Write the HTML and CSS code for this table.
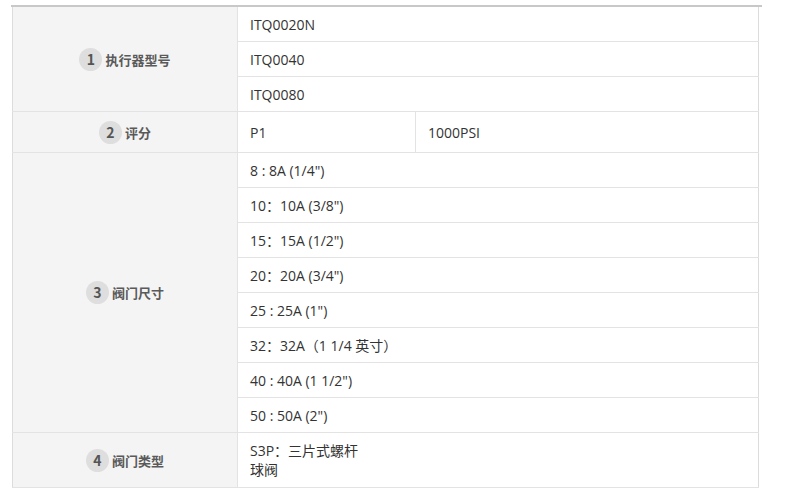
FILE: index.html
```html
<!DOCTYPE html>
<html lang="zh">
<head>
<meta charset="utf-8">
<link rel="stylesheet" href="styles.css">
</head>
<body>
<div class="wrap">
  <table class="spec">
    <colgroup>
      <col class="c1">
      <col class="c2">
      <col class="c3">
    </colgroup>
    <tr class="r">
      <th rowspan="3"><span class="lbl"><span class="num">1</span>执行器型号</span></th>
      <td colspan="2">ITQ0020N</td>
    </tr>
    <tr class="r"><td colspan="2">ITQ0040</td></tr>
    <tr class="r"><td colspan="2">ITQ0080</td></tr>
    <tr class="r2">
      <th><span class="lbl"><span class="num">2</span>评分</span></th>
      <td class="half">P1</td>
      <td>1000PSI</td>
    </tr>
    <tr class="r">
      <th rowspan="8"><span class="lbl"><span class="num">3</span>阀门尺寸</span></th>
      <td colspan="2">8 : 8A (1/4")</td>
    </tr>
    <tr class="r"><td colspan="2">10：10A (3/8")</td></tr>
    <tr class="r"><td colspan="2">15：15A (1/2")</td></tr>
    <tr class="r"><td colspan="2">20：20A (3/4")</td></tr>
    <tr class="r"><td colspan="2">25 : 25A (1")</td></tr>
    <tr class="r"><td colspan="2">32：32A（1 1/4 英寸）</td></tr>
    <tr class="r"><td colspan="2">40 : 40A (1 1/2")</td></tr>
    <tr class="r"><td colspan="2">50 : 50A (2")</td></tr>
    <tr class="r3">
      <th><span class="lbl"><span class="num">4</span>阀门类型</span></th>
      <td colspan="2" class="multi">S3P：三片式螺杆<br>球阀</td>
    </tr>
  </table>
</div>
</body>
</html>
```
FILE: styles.css
```css
html, body {
  margin: 0;
  padding: 0;
  background: #fff;
}
body {
  font-family: "Open Sans", "Noto Sans CJK SC", sans-serif;
  font-size: 14px;
  color: #333;
}
.wrap {
  margin: 5px 0 0 11px;
  width: 750px;
  border-top: 2px solid #c8c8c8;
  padding-left: 1px;
}
.spec {
  width: 747px;
  border-collapse: collapse;
  table-layout: fixed;
  border-left: 1px solid #dcdcdc;
  border-right: 1px solid #dcdcdc;
}
.c1 { width: 225px; }
.c2 { width: 178px; }
.spec th, .spec td {
  border-top: 1px solid #e3e3e3;
  border-bottom: 1px solid #e3e3e3;
  padding: 0 12px;
  text-align: left;
  font-weight: normal;
  line-height: 19px;
  vertical-align: middle;
  white-space: nowrap;
}
.spec tr:first-child th, .spec tr:first-child td { border-top: none; }
.spec th {
  background: #f4f4f4;
  text-align: center;
  border-right: 1px solid #e3e3e3;
}
.spec td.half {
  border-right: 1px solid #e3e3e3;
}
.r td { height: 34px; }
.r2 th, .r2 td { height: 40px; }
.r3 th, .r3 td { height: 54px; }
.multi { padding-top: 1px; padding-bottom: 2px; line-height: 20px; }
.lbl {
  display: inline-flex;
  align-items: center;
  gap: 3px;
  color: #5a5a5a;
  font-family: "Noto Sans CJK SC", sans-serif;
  font-weight: 700;
  font-size: 13px;
}
.num {
  width: 23px;
  height: 23px;
  border-radius: 50%;
  background: #dedede;
  color: #555;
  display: inline-flex;
  align-items: center;
  justify-content: center;
  font-weight: 700;
  font-size: 14px;
}
```
